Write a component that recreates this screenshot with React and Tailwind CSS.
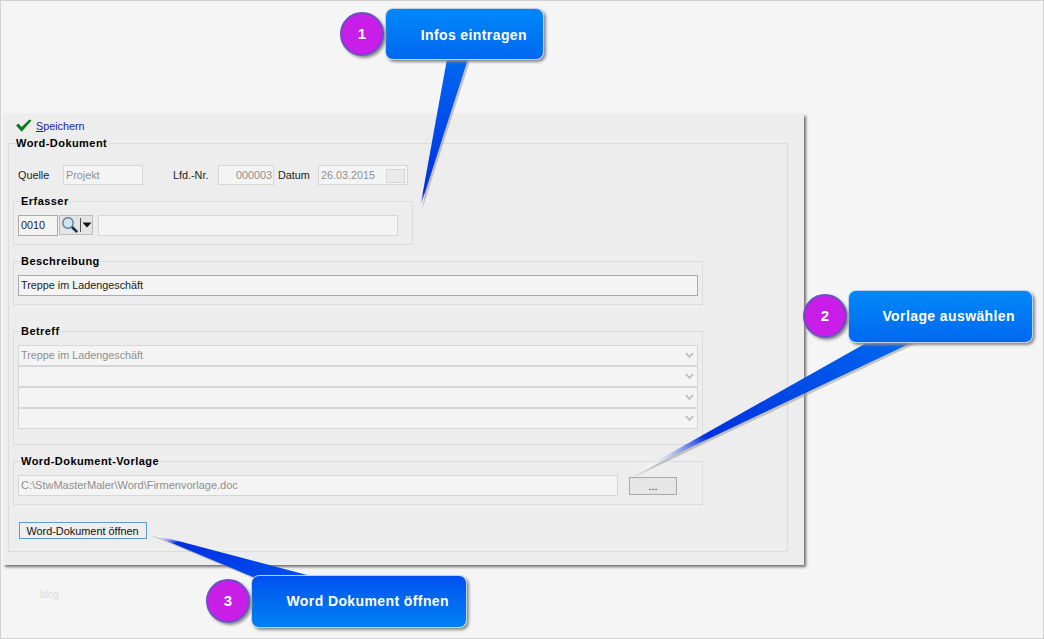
import React from "react";

const ui = "font-['Liberation_Sans',Arial,sans-serif]";

function Group({ title, className = "", children }) {
  return (
    <div className={`box-border border border-[#dcdcdc] pl-1 ${className}`}>
      <div className="-mt-2 ml-[3px] h-[15px] w-fit bg-[#ededed] text-[11px] leading-[15px] font-bold text-black tracking-[0.45px]">
        {title}
      </div>
      {children}
    </div>
  );
}

function Field({ className = "", children }) {
  return (
    <div className={`box-border flex items-center border border-[#d6d6d6] bg-[#f4f4f4] pl-[2px] text-[10.8px] text-[#8f8f8f] ${className}`}>
      {children}
    </div>
  );
}

function Combo({ children }) {
  return (
    <div className="box-border flex h-[21px] w-[680px] items-center justify-between border border-[#d6d6d6] bg-[#f4f4f4] pr-[3px] pl-[2px] text-[10.8px] text-[#8f8f8f]">
      <span>{children}</span>
      <svg width="9" height="7" viewBox="0 0 9 7" aria-hidden="true">
        <path d="M1 1.2 L4.5 5 L8 1.2" fill="none" stroke="#bdbdbd" strokeWidth="1.8" />
      </svg>
    </div>
  );
}

function Tail({ id, x, y, w, h, points, stops, grad }) {
  const shadow = points.map(([a, b]) => `${a + 2},${b + 2}`).join(" ");
  const halo = points.map(([a, b]) => `${a},${b}`).join(" ");
  return (
    <svg className="absolute" style={{ left: x, top: y }} width={w} height={h} aria-hidden="true">
      <defs>
        <linearGradient id={id} {...grad}>
          {stops.map(([o, c, a]) => (
            <stop key={o} offset={o} stopColor={c} stopOpacity={a} />
          ))}
        </linearGradient>
      </defs>
      <polygon points={shadow} fill="#9a9a9a" opacity="0.55" />
      <polygon points={halo} fill={`url(#${id})`} />
    </svg>
  );
}

function Bubble({ className, text, gradient, n, circle }) {
  return (
    <>
      <div className={`absolute box-border flex items-center justify-end rounded-lg border border-[#bcd0ee] shadow-[2px_2px_3px_#8a8a8a] text-[14px] font-bold tracking-[0.4px] text-white font-['Liberation_Sans',Arial,sans-serif] ${gradient} ${className}`}>
        {text}
      </div>
      <div className={`absolute box-border flex h-[44px] w-[44px] items-center justify-center rounded-full border-2 border-[#6a4fc4] bg-[#c81ee8] shadow-[2px_2px_3px_#8a8a8a] text-[15px] font-bold text-white font-['Liberation_Sans',Arial,sans-serif] ${circle}`}>
        {n}
      </div>
    </>
  );
}

export default function App() {
  return (
    <div className={`relative box-border h-[639px] w-[1044px] overflow-hidden border border-[#d2d2d2] bg-[#f5f5f5] pt-[113px] pl-[2px] text-black ${ui}`}>
      {/* Dialog panel */}
      <div className="box-border h-[451px] w-[801px] rounded-tl-sm bg-[#ededed] pl-[5px] shadow-[2px_2px_3px_#6f6f6f]">
        <div className="flex h-[29px] items-start gap-[4px] pt-[5px] pl-[8px]">
          <svg className="-ml-px" width="17" height="13" viewBox="0 0 16 13" aria-hidden="true">
            <path d="M0.5 6.5 L3 4.5 L6 8 L14 0.5 L16 1.5 L6.2 12.8 Z" fill="#0b7a1f" />
          </svg>
          <a className="text-[10.8px] leading-[15px] text-[#1c1ca8]"><span className="underline">S</span>peichern</a>
        </div>

        <Group title="Word-Dokument" className="h-[409px] w-[780px]">
          <div className="mt-[14px] flex h-5 items-center text-[10.8px] text-[#222]">
            <span className="ml-[5px] w-[45px] pt-px">Quelle</span>
            <Field className="h-5 w-20 pt-px">Projekt</Field>
            <span className="ml-[30px] w-[45px] pt-px">Lfd.-Nr.</span>
            <Field className="h-5 w-14 justify-end pt-px pr-[1px]">000003</Field>
            <span className="ml-1 w-10 pt-px">Datum</span>
            <Field className="h-5 w-[90px] justify-between pt-px pr-[2px]">
              26.03.2015
              <span className="box-border h-[14px] w-[19px] border border-[#d6d6d6] bg-[#ebebeb]" />
            </Field>
          </div>

          <Group title="Erfasser" className="mt-4 h-[44px] w-[400px]">
            <div className="mt-[6px] flex items-start">
              <div className="box-border flex h-[21px] w-10 items-center border border-[#a9a9a9] bg-[#f4f4f4] pl-[2px] text-[10.8px] text-[#222]">0010</div>
              <div className="ml-px box-border flex h-5 w-[34px] items-center border border-[#bdbdbd] bg-[#e4e4e4] pl-[1px]">
                <svg width="18" height="18" viewBox="0 0 18 18" aria-hidden="true">
                  <circle cx="7" cy="7" r="5.2" fill="#cfe6ee" stroke="#5a7f96" strokeWidth="1.4" />
                  <path d="M11 11 L16.2 16.2" stroke="#1c2f52" strokeWidth="2.6" />
                </svg>
                <span className="mx-[1px] h-[14px] w-px bg-[#555]" />
                <svg width="10" height="6" viewBox="0 0 10 6" aria-hidden="true">
                  <path d="M0.5 0.5 H9.5 L5 5.5 Z" fill="#111" />
                </svg>
              </div>
              <Field className="ml-[5px] h-[21px] w-[300px]" />
            </div>
          </Group>

          <Group title="Beschreibung" className="mt-4 h-[44px] w-[690px]">
            <div className="mt-[6px] box-border flex h-[21px] w-[680px] items-center border border-[#a9a9a9] bg-[#f4f4f4] pl-[2px] text-[10.8px] text-[#222]">
              Treppe im Ladengeschäft
            </div>
          </Group>

          <Group title="Betreff" className="mt-[26px] h-[114px] w-[690px]">
            <div className="mt-[6px] flex flex-col">
              <Combo>Treppe im Ladengeschäft</Combo>
              <Combo />
              <Combo />
              <Combo />
            </div>
          </Group>

          <Group title="Word-Dokument-Vorlage" className="mt-4 h-[44px] w-[690px]">
            <div className="mt-[6px] flex items-center">
              <Field className="h-[21px] w-[600px] text-[11px]">C:\StwMasterMaler\Word\Firmenvorlage.doc</Field>
              <button className="ml-[11px] box-border h-[18px] w-12 border border-[#a9a9a9] bg-[#e6e6e6] text-[10.8px] leading-[14px] text-[#222]">...</button>
            </div>
          </Group>

          <button className="mt-[17px] ml-[6px] box-border block h-[17px] w-[128px] border border-[#5b9bd5] bg-[#eeeeee] pr-px text-[10.9px] leading-[14px] text-[#111]">
            Word-Dokument öffnen
          </button>
        </Group>
      </div>

      <div className="mt-[22px] ml-[37px] text-[10px] text-[#dcdcdc]">blog</div>

      {/* Callouts */}
      <Tail id="t1" x={400} y={40} w={90} h={175}
        points={[[46, 18], [67, 18], [19, 167]]}
        grad={{ x1: "0", y1: "0", x2: "0", y2: "1" }}
        stops={[[0, "#0068f0", 1], [0.9, "#0030e0", 1], [1, "#ffffff", 0.6]]} />
      <Bubble className="top-[7px] left-[384px] h-[52px] w-[159px] pt-[2px] pr-[16px]" text="Infos eintragen" n="1" circle="top-[11px] left-[339px]"
        gradient="bg-gradient-to-b from-[#0088f8] to-[#0068f0]" />

      <Tail id="t2" x={620} y={330} w={310} h={160}
        points={[[247, 11], [292, 11], [9, 145]]}
        grad={{ x1: "1", y1: "0", x2: "0", y2: "1" }}
        stops={[[0, "#0068f0", 1], [0.72, "#0030e0", 1], [0.92, "#ffffff", 0.5], [1, "#ffffff", 0.3]]} />
      <Bubble className="top-[289px] left-[847px] h-[53px] w-[185px] pr-[17px]" text="Vorlage auswählen" n="2" circle="top-[293px] left-[802px]"
        gradient="bg-gradient-to-b from-[#0088f8] to-[#0068f0]" />

      <Tail id="t3" x={140} y={525} w={180} h={60}
        points={[[7, 7], [112, 51], [170, 50]]}
        grad={{ x1: "1", y1: "1", x2: "0", y2: "0" }}
        stops={[[0, "#0050f0", 1], [0.8, "#0030e0", 1], [0.92, "#ffffff", 0.6]]} />
      <Bubble className="top-[574px] left-[250px] h-[53px] w-[216px] pr-[17px]" text="Word Dokument öffnen" n="3" circle="top-[578px] left-[205px]"
        gradient="bg-gradient-to-b from-[#0050f0] to-[#0080f0]" />
    </div>
  );
}
